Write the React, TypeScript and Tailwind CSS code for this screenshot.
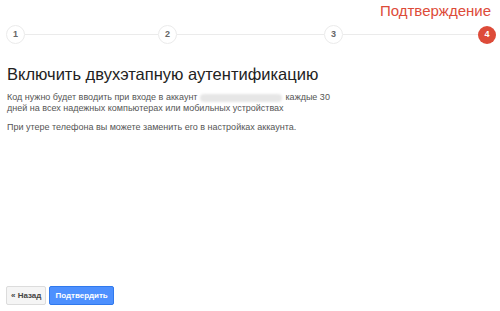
const steps = ["1", "2", "3", "4"];
const lines = ["w-[133px]", "w-[147px]", "w-[135px]"];

export default function App() {
  return (
    <div className="w-[500px] h-[311px] bg-white flex flex-col font-['Liberation_Sans',Arial,sans-serif] overflow-hidden">
      <div className="flex justify-end pr-[9px] pt-[2px] h-[20px]">
        <span className="text-[15px] leading-[18px] text-[#dd4b39]">Подтверждение</span>
      </div>
      <div className="flex items-center pl-[6px] mt-[5px]">
        {steps.map((s, i) => (
          <div key={s} className="flex items-center">
            {i === 3 ? (
              <div className="w-[18px] h-[18px] rounded-full bg-[#dd4b39] flex items-center justify-center text-[9px] font-bold text-white">
                {s}
              </div>
            ) : (
              <div className="w-[19px] h-[19px] rounded-full border border-[#ebebeb] bg-white flex items-center justify-center text-[9px] font-bold text-[#666]">
                {s}
              </div>
            )}
            {i < 3 && <div className={`${lines[i]} h-px bg-[#ebebeb]`} />}
          </div>
        ))}
      </div>
      <div className="px-[7px] mt-[19px]">
        <h1 className="text-[16.5px] leading-[22px] text-[#222] font-normal">
          Включить двухэтапную аутентификацию
        </h1>
        <div className="mt-[7px] text-[9px] leading-[11px] text-[#555]">
          <div className="flex items-center gap-[3px]">
            <span>Код нужно будет вводить при входе в аккаунт</span>
            <span className="w-[82px] h-[8px] bg-[#e6e6e6] rounded-sm blur-[1px]"></span>
            <span>каждые 30</span>
          </div>
          <div>дней на всех надежных компьютерах или мобильных устройствах</div>
        </div>
        <p className="mt-[8px] text-[9px] leading-[11px] text-[#555]">
          При утере телефона вы можете заменить его в настройках аккаунта.
        </p>
      </div>
      <div className="flex-1" />
      <div className="flex gap-[3px] pl-[6px] pb-[6px]">
        <button className="h-[19px] px-[4px] rounded-[2px] border border-[#dcdcdc] bg-[#f5f5f5] text-[8px] font-bold text-[#444]">
          « Назад
        </button>
        <button className="h-[19px] px-[5px] rounded-[2px] border border-[#3079ed] bg-[#4d90fe] text-[8px] font-bold text-white">
          Подтвердить
        </button>
      </div>
    </div>
  );
}
